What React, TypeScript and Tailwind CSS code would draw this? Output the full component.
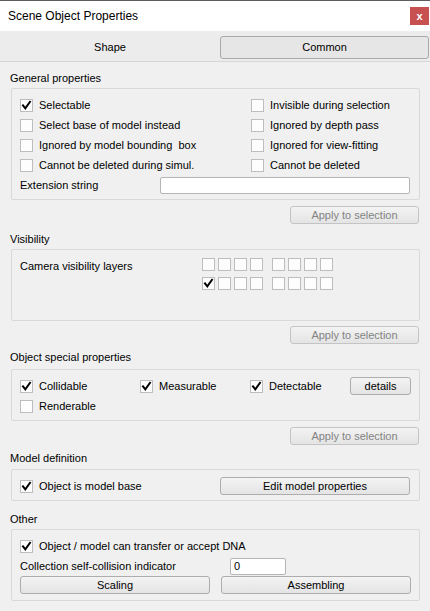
import React from "react";

const font = { fontFamily: '"Liberation Sans", Arial, sans-serif' };

function Check({ checked = false }: { checked?: boolean }) {
  return (
    <div className="w-[13px] h-[13px] shrink-0 border border-[#bdbdbd] bg-[#fdfdfd] flex items-center justify-center">
      {checked && (
        <svg width="11" height="11" viewBox="0 0 11 11">
          <path d="M2 5.5 L4.3 8.3 L9 1.8" fill="none" stroke="#000" strokeWidth="2" strokeLinecap="square" strokeLinejoin="miter" />
        </svg>
      )}
    </div>
  );
}

function CB({ label, checked = false, className = "" }: { label: string; checked?: boolean; className?: string }) {
  return (
    <div className={"flex items-center gap-[6px] h-[20px] " + className}>
      <Check checked={checked} />
      <span className="text-[11px] text-black whitespace-pre">{label}</span>
    </div>
  );
}

function Btn({ children, className = "", disabled = false }: { children: React.ReactNode; className?: string; disabled?: boolean }) {
  return (
    <div
      className={
        "h-[18px] flex items-center justify-center border border-[#adadad] rounded-[3px] bg-gradient-to-b from-[#f3f3f3] to-[#e4e4e4] text-[11px] " +
        (disabled ? "text-[#838383] border-[#c4c4c4] " : "text-black ") +
        className
      }
    >
      {children}
    </div>
  );
}

function Label({ children, className = "" }: { children: React.ReactNode; className?: string }) {
  return <div className={"h-[14px] leading-[14px] text-[11px] text-black pl-[10px] " + className}>{children}</div>;
}

function Group({ children, className = "" }: { children: React.ReactNode; className?: string }) {
  return (
    <div className={"ml-[11px] w-[409px] border border-[#d9d9d9] rounded-[2px] " + className}>{children}</div>
  );
}

function Apply({ className = "" }: { className?: string }) {
  return (
    <div className={"flex justify-end pr-[11px] " + className}>
      <Btn disabled className="w-[129px]">Apply to selection</Btn>
    </div>
  );
}

function Grid8({ firstChecked = false }: { firstChecked?: boolean }) {
  return (
    <div className="flex gap-[9px]">
      <div className="flex gap-[3px]">
        <Check checked={firstChecked} />
        <Check />
        <Check />
        <Check />
      </div>
      <div className="flex gap-[3px]">
        <Check />
        <Check />
        <Check />
        <Check />
      </div>
    </div>
  );
}

export default function App() {
  return (
    <div className="w-[430px] h-[611px] bg-[#f0f0f0] overflow-hidden flex flex-col" style={font}>
      {/* Title bar */}
      <div className="h-[31px] bg-white border-t border-[#5c5c5c] flex items-center justify-between shrink-0">
        <span className="pl-[8px] text-[12px] text-black">Scene Object Properties</span>
        <div className="w-[19px] h-[18px] bg-[#c75050] mr-[1px] flex items-center justify-center text-white text-[11px] font-bold leading-none">
          x
        </div>
      </div>
      {/* Tabs */}
      <div className="h-[31px] bg-[#ececec] border-b border-[#d6d6d6] flex items-center shrink-0">
        <div className="w-[220px] flex justify-center text-[11px] text-black pt-[2px]">Shape</div>
        <div className="w-[209px] h-[23px] mt-[2px] border border-[#a9a9a9] rounded-[3px] bg-[#e6e6e6] flex items-center justify-center text-[11px] text-black">
          Common
        </div>
      </div>

      {/* General properties */}
      <Label className="mt-[9px]">General properties</Label>
      <Group className="mt-[3px] h-[112px] pt-[6px] pl-[8px]">
        <div className="flex">
          <div className="w-[231px]">
            <CB label="Selectable" checked />
            <CB label="Select base of model instead" />
            <CB label="Ignored by model bounding  box" />
            <CB label="Cannot be deleted during simul." />
          </div>
          <div>
            <CB label="Invisible during selection" />
            <CB label="Ignored by depth pass" />
            <CB label="Ignored for view-fitting" />
            <CB label="Cannot be deleted" />
          </div>
        </div>
        <div className="flex items-center h-[20px]">
          <span className="w-[140px] text-[11px] text-black">Extension string</span>
          <div className="w-[250px] h-[17px] bg-white border border-[#b5b5b5] rounded-[2px]" />
        </div>
      </Group>
      <Apply className="mt-[6px]" />

      {/* Visibility */}
      <Label className="mt-[8px]">Visibility</Label>
      <Group className="mt-[3px] h-[72px] pt-[8px] pl-[8px]">
        <div className="flex">
          <div className="w-[182px] text-[11px] text-black leading-[13px] pt-[2px]">Camera visibility layers</div>
          <div className="flex flex-col gap-[6px]">
            <Grid8 />
            <Grid8 firstChecked />
          </div>
        </div>
      </Group>
      <Apply className="mt-[5px]" />

      {/* Object special properties */}
      <Label className="mt-[6px]">Object special properties</Label>
      <Group className="mt-[5px] h-[52px] pt-[6px] pl-[8px]">
        <div className="flex items-center h-[20px]">
          <CB label="Collidable" checked className="w-[120px]" />
          <CB label="Measurable" checked className="w-[110px]" />
          <CB label="Detectable" checked className="w-[100px]" />
          <Btn className="w-[61px]">details</Btn>
        </div>
        <CB label="Renderable" />
      </Group>
      <Apply className="mt-[6px]" />

      {/* Model definition */}
      <Label className="mt-[6px]">Model definition</Label>
      <Group className="mt-[4px] h-[32px] pt-[6px] pl-[8px]">
        <div className="flex items-center h-[20px]">
          <CB label="Object is model base" checked className="w-[200px]" />
          <Btn className="w-[190px]">Edit model properties</Btn>
        </div>
      </Group>

      {/* Other */}
      <Label className="mt-[11px]">Other</Label>
      <Group className="mt-[3px] h-[72px] pt-[6px] pl-[8px]">
        <CB label="Object / model can transfer or accept DNA" checked />
        <div className="flex items-center h-[20px]">
          <span className="w-[210px] text-[11px] text-black">Collection self-collision indicator</span>
          <div className="w-[56px] h-[17px] bg-white border border-[#b5b5b5] rounded-[2px] text-[11px] leading-[15px] pl-[3px]">0</div>
        </div>
        <div className="flex gap-[11px]">
          <Btn className="w-[190px]">Scaling</Btn>
          <Btn className="w-[190px]">Assembling</Btn>
        </div>
      </Group>
    </div>
  );
}
